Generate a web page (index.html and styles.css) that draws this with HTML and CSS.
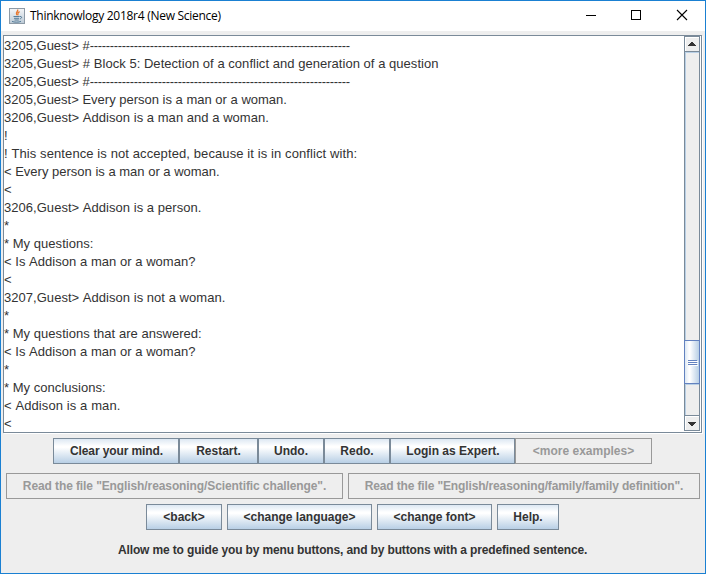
FILE: index.html
```html
<!DOCTYPE html>
<html lang="en">
<head>
<meta charset="utf-8">
<title>Thinknowlogy 2018r4 (New Science)</title>
<link rel="stylesheet" href="styles.css">
</head>
<body>
<div class="window">
  <header class="titlebar">
    <svg class="java" width="16" height="16" viewBox="0 0 16 16">
      <defs><linearGradient id="g" x1="0" y1="0" x2="0" y2="1"><stop offset="0" stop-color="#f4f6f8"/><stop offset="1" stop-color="#bccad6"/></linearGradient></defs>
      <rect x=".5" y=".5" width="15" height="15" fill="url(#g)" stroke="#8d9aa6"/>
      <path d="M8.6 1.5C9.8 3.5 5.6 4.3 7.8 7.2M10.6 3.7C7.5 5.2 9.7 5.8 8.6 7.4" fill="none" stroke="#e8762c" stroke-width="1.3"/>
      <path d="M4.500 8.500h6.200M5 10.300h5M5.500 12h4.300M3 13.400c2 1 7 1 9 0M11 8.500c2.400-.4 2 2-.2 2.400" fill="none" stroke="#4a7391" stroke-width=".9"/>
    </svg>
    <h1 class="title">Thinknowlogy 2018r4 (New Science)</h1>
    <svg class="controls" width="138" height="30" viewBox="0 0 138 30" fill="none" stroke="#000" shape-rendering="crispEdges">
      <path d="M19 14.500h10"/><rect x="64.500" y="9.500" width="9" height="9"/><path d="M110 9l10 10M120 9l-10 10" shape-rendering="auto" stroke-width="1.1"/>
    </svg>
  </header>
  <main class="scrollpane">
    <div class="log">
      <p>3205,Guest&gt; #<span class="dashes">-----------------------------------------------------------------</span></p>
      <p class="wide">3205,Guest&gt; # Block 5: Detection of a conflict and generation of a question</p>
      <p>3205,Guest&gt; #<span class="dashes">-----------------------------------------------------------------</span></p>
      <p>3205,Guest&gt; Every person is a man or a woman.</p>
      <p class="wide">3206,Guest&gt; Addison is a man and a woman.</p>
      <p>!</p>
      <p class="loose">! This sentence is not accepted, because it is in conflict with:</p>
      <p>&lt; Every person is a man or a woman.</p>
      <p>&lt;</p>
      <p class="wide">3206,Guest&gt; Addison is a person.</p>
      <p>*</p>
      <p class="wide">* My questions:</p>
      <p class="wide">&lt; Is Addison a man or a woman?</p>
      <p>&lt;</p>
      <p class="wide">3207,Guest&gt; Addison is not a woman.</p>
      <p>*</p>
      <p class="wide">* My questions that are answered:</p>
      <p class="wide">&lt; Is Addison a man or a woman?</p>
      <p>*</p>
      <p class="wide">* My conclusions:</p>
      <p class="loose">&lt; Addison is a man.</p>
      <p>&lt;</p>
    </div>
    <div class="scrollbar">
      <div class="arrow up"><svg width="8" height="4" viewBox="0 0 8 4" shape-rendering="crispEdges"><path d="M3 0h2v1h1v1h1v1h1v1H0V3h1V2h1V1h1z" fill="#333"/></svg></div>
      <div class="track-top"></div>
      <div class="thumb"><i></i><i></i><i></i></div>
      <div class="track-bottom"></div>
      <div class="arrow down"><svg width="8" height="4" viewBox="0 0 8 4" shape-rendering="crispEdges"><path d="M0 0h8v1H7v1H6v1H5v1H3V3H2V2H1V1H0z" fill="#333"/></svg></div>
    </div>
  </main>
  <div class="row joined">
    <button class="w126">Clear your mind.</button><button class="w79">Restart.</button><button class="w66">Undo.</button><button class="w66">Redo.</button><button class="w125">Login as Expert.</button><button class="w137" disabled>&lt;more examples&gt;</button>
  </div>
  <div class="row files">
    <button class="w337" disabled>Read the file "English/reasoning/Scientific challenge".</button><button class="w352" disabled>Read the file "English/reasoning/family/family definition".</button>
  </div>
  <div class="row nav">
    <button class="w76">&lt;back&gt;</button><button class="w145">&lt;change language&gt;</button><button class="w115">&lt;change font&gt;</button><button class="w62">Help.</button>
  </div>
  <p class="hint">Allow me to guide you by menu buttons, and by buttons with a predefined sentence.</p>
</div>
</body>
</html>
```
FILE: styles.css
```css
* { box-sizing: border-box; }
body { margin: 0; font-family: "Liberation Sans", Arial, sans-serif; color: #333; }
p, h1 { margin: 0; }
.window { width: 706px; height: 574px; border: 1px solid #1a80d2; background: #eee; overflow: hidden; }
.titlebar { display: flex; align-items: center; height: 30px; padding-left: 8px; background: #fff; }
.title { flex: 1; margin-left: 5px; font: 12px/30px "Open Sans", "Noto Sans", sans-serif; color: #000; letter-spacing: -.28px; white-space: nowrap; }
.scrollpane { display: flex; width: 699px; height: 398px; margin: 4px 0 0 2px; border: 1px solid #7a8a99; background: #fff; box-shadow: 1px 1px #fff; }
.log { flex: 1; padding-top: 1px; overflow: hidden; font-size: 13px; line-height: 18px; font-kerning: none; white-space: nowrap; }
.log p { height: 18px; }
.log .wide { letter-spacing: .036px; }
.log .loose { letter-spacing: .1px; }
.dashes { letter-spacing: -.329px; }
.scrollbar { display: flex; flex-direction: column; width: 16px; height: 395px; margin-right: 1px; border: 1px solid #7a8a99; background: #eee; }
.arrow { display: flex; flex: none; align-items: center; justify-content: center; height: 15px; box-shadow: inset 1px 1px #fff; }
.up { border-bottom: 1px solid #7a8a99; }
.down { border-top: 1px solid #7a8a99; padding-top: 1px; }
.track-top { flex: none; height: 288px; border: solid #b8cfe5; border-width: 1px 0 0 1px; }
.thumb { display: flex; flex: none; flex-direction: column; align-items: center; justify-content: center; gap: 1px; height: 44px; margin: 0 -1px; border: 1px solid #6382bf; background: linear-gradient(90deg, #dde8f3, #fff 30%, #fff 35%, #b8cfe5); }
.thumb i { width: 9px; height: 1px; background: #6382bf; box-shadow: 1px 1px #fff; }
.track-bottom { flex: 1; border: solid #b8cfe5; border-width: 1px 0 0 1px; }
.row { display: flex; }
.joined { margin: 5px 0 0 52px; }
.files { gap: 5px; margin: 9px 0 0 5px; }
.nav { gap: 5px; margin: 5px 0 0 145px; }
button { height: 26px; padding: 0; border: 1px solid #7a8a99; background: linear-gradient(#dde8f3 0, #fff 30%, #fff 35%, #b8cfe5 100%); font: bold 12px/24px "Liberation Sans", Arial, sans-serif; color: #333; white-space: nowrap; }
button:disabled { border-color: #999; background: #eee; color: #999; }
.joined .w126 { letter-spacing: -.1px; padding-left: 1px; }
.joined .w125 { padding-left: 1px; }
.files .w337 { width: 337px; letter-spacing: -.1px; }
.files .w352 { width: 352px; letter-spacing: -.14px; }
.w126 { width: 126px; } .w79 { width: 79px; } .w66 { width: 66px; } .w125 { width: 125px; } .w137 { width: 137px; }
.w76 { width: 76px; } .w145 { width: 145px; } .w115 { width: 115px; } .w62 { width: 62px; }
.hint { margin-top: 12px; padding-left: 117px; font-size: 12px; font-weight: bold; line-height: 16px; letter-spacing: -.142px; white-space: nowrap; }
```
